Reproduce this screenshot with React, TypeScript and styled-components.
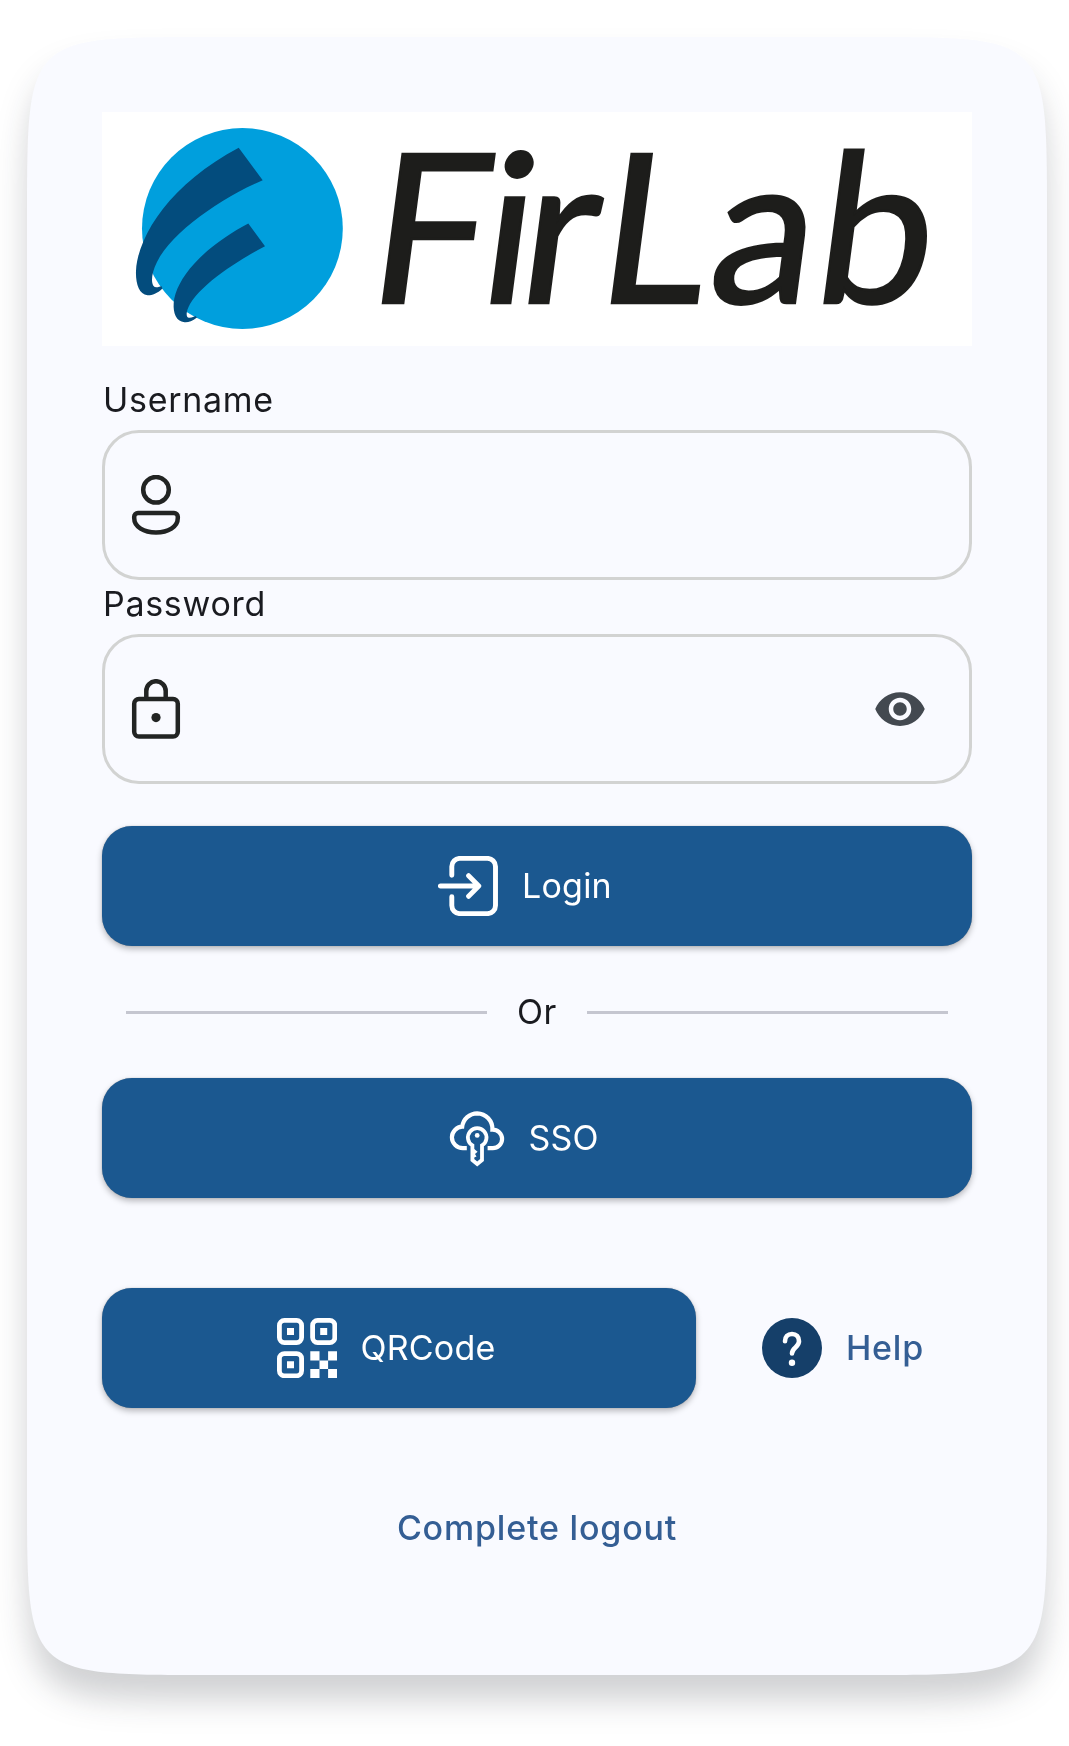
import React from "react";
import styled, { createGlobalStyle, css } from "styled-components";

const GlobalStyle = createGlobalStyle`
  *, *::before { box-sizing: border-box; }
  body {
    margin: 0;
    background: #fff;
    color: #1a1b20;
    font-family: Inter, "Liberation Sans", sans-serif;
    font-size: 34px;
    font-weight: 400;
    line-height: 48px;
    letter-spacing: 0.7px;
  }
`;

const Page = styled.main`
  display: flex;
  justify-content: center;
  align-items: flex-start;
  min-height: 1746px;
  padding: 37px 22px 0 27px;
  overflow: hidden;
`;

const Card = styled.section`
  position: relative;
  isolation: isolate;
  display: flex;
  flex-direction: column;
  width: 1020px;
  height: 1638px;
  padding: 75px;

  &::before {
    content: "";
    position: absolute;
    inset: 0;
    z-index: -1;
    background: #f9faff;
    clip-path: path("M0 180C0 0 0 0 180 0H840C1020 0 1020 0 1020 180V1458C1020 1638 1020 1638 840 1638H180C0 1638 0 1638 0 1458Z");
  }
`;

const CardShadow = styled.div`
  filter: drop-shadow(0 25px 16px rgba(22, 26, 34, 0.2));
`;

const LogoPanel = styled.div`
  height: 234px;
  background: #fff;
`;

const LogoImage = styled.svg`
  display: block;
  overflow: visible;
`;

const Label = styled.label<{ $height: number }>`
  display: flex;
  align-items: flex-end;
  height: ${(p) => p.$height}px;
  padding: 0 0 6px 1px;
`;

const Field = styled.div`
  display: flex;
  align-items: center;
  height: 150px;
  padding: 0 42px 0 21px;
  border: 3px solid #d2d3d2;
  border-radius: 37px;
`;

const Input = styled.input`
  flex: 1;
  min-width: 0;
  height: 100%;
  padding: 0 24px;
  border: 0;
  outline: 0;
  background: transparent;
  font: inherit;
`;

const buttonText = css`
  font: inherit;
  letter-spacing: inherit;
  display: flex;
  align-items: center;
  justify-content: center;
  border: 0;
  padding: 0;
`;

const PrimaryButton = styled.button<{ $width?: number; $gap?: number; $inset?: number }>`
  ${buttonText}
  gap: ${(p) => p.$gap ?? 24}px;
  flex: none;
  width: ${(p) => (p.$width ? `${p.$width}px` : "100%")};
  height: 120px;
  padding-right: ${(p) => p.$inset ?? 24}px;
  border-radius: 30px;
  background: #1b5890;
  color: #fff;
  font-weight: 400;
  letter-spacing: 0.2px;
  box-shadow: 0 0 1px rgba(0, 0, 0, 0.35), 0 3px 6px rgba(0, 0, 0, 0.27);
`;

const TextButton = styled.button`
  ${buttonText}
  gap: 24px;
  background: transparent;
  color: #345e94;
  font-weight: 500;
  letter-spacing: 0.8px;
`;

const LoginArea = styled.div`
  padding-top: 42px;
`;

const OrRow = styled.div`
  display: flex;
  align-items: center;
  gap: 30px;
  height: 132px;
  padding: 0 24px;
`;

const Rule = styled.span`
  flex: 1;
  height: 3px;
  background: #c5c6d0;
`;

const ActionRow = styled.div`
  display: flex;
  margin-top: 90px;
`;

const HelpSlot = styled.div`
  display: flex;
  flex: 1;
  justify-content: center;
  align-items: center;
  padding-left: 18px;
`;

const LogoutRow = styled.div`
  display: flex;
  justify-content: center;
  margin-top: 96px;
`;

const Icon = styled.svg<{ $size?: number }>`
  flex: none;
  display: block;
  width: ${(p) => p.$size ?? 60}px;
  height: ${(p) => p.$size ?? 60}px;
`;

const Wordmark = styled.text`
  font-family: Lato, "Liberation Sans", sans-serif;
  font-size: 208px;
  font-weight: 400;
  letter-spacing: 0;
  fill: #1d1d1b;
  stroke: #1d1d1b;
  stroke-width: 2.5px;
`;

const Logo = () => (
  <LogoImage width="870" height="234" viewBox="102 112 870 234" role="img" aria-label="FirLab">
    <circle cx="242.4" cy="228.5" r="100.4" fill="#009fdd" />
    <path d="M152 273 Q155 282 161.500 288 Q157 289 154.500 285 Q151 280 152 273Z" fill="#fff" />
    <path d="M187 313 Q191 317 195.500 317.500 Q190 319 187.500 317.500 Q185.500 316 187 313Z" fill="#fff" />
    <path
      fill="#034c7d"
      d="M238.700 147.700L262.700 180.300C221 198 172 232 157 262C150 276 151 287 156 287.300C158 287.500 160 286.500 161.300 286L162.500 288.500C157 294 151 295.500 147.500 295.200C139 294.500 135.500 283 136 271C138 234 172 183 238.700 147.700Z"
    />
    <path
      fill="#034c7d"
      d="M248.300 223.500L265 246.300C237 261 203 283 190 304C185.500 312 186 317.500 189 317.800C192 318 194 316.500 195.500 316L197 317.500C192 321.500 188 322.500 184.500 322.200C176 321.500 173 313 173.700 303C176 279 202 248 248.300 223.500Z"
    />
    <Wordmark x="364 476 515 593 705 810" y="0" transform="translate(0 303) skewX(-7.5)">
      FirLab
    </Wordmark>
  </LogoImage>
);

const UserIcon = () => (
  <Icon viewBox="0 0 60 60" fill="none" stroke="#222423" strokeWidth="4.500">
    <circle cx="30" cy="14.800" r="12.800" />
    <path d="M12 37.900H48a3.800 3.800 0 0 1 3.800 3.800V43C51.800 52 42 57.400 30 57.400S8.200 52 8.200 43V41.700A3.800 3.800 0 0 1 12 37.900Z" />
  </Icon>
);

const LockIcon = () => (
  <Icon viewBox="0 0 60 60" fill="none" stroke="#222423" strokeWidth="4.500">
    <rect x="8.200" y="19.900" width="43.600" height="37.700" rx="4.800" />
    <path d="M20.300 19.900V11.900a9.700 9.700 0 0 1 19.400 0V19.900" />
    <circle cx="30" cy="38.600" r="4.600" fill="#222423" stroke="none" />
  </Icon>
);

const EyeIcon = () => (
  <Icon $size={54} viewBox="0 0 24 24" fill="#434950">
    <path d="M12 4.500C7 4.500 2.730 7.610 1 12c1.730 4.390 6 7.500 11 7.500s9.270-3.110 11-7.500c-1.730-4.390-6-7.500-11-7.500zM12 17c-2.760 0-5-2.240-5-5s2.240-5 5-5 5 2.240 5 5-2.240 5-5 5zm0-8c-1.660 0-3 1.340-3 3s1.340 3 3 3 3-1.340 3-3-1.340-3-3-3z" />
  </Icon>
);

const LoginIcon = () => (
  <Icon viewBox="0 0 60 60" fill="none" stroke="#fff" strokeWidth="4.900" strokeLinecap="round" strokeLinejoin="round">
    <path d="M13.800 19.300V10.400a8 8 0 0 1 8-8H49.500a8 8 0 0 1 8 8V49.600a8 8 0 0 1-8 8H21.800a8 8 0 0 1-8-8V40.800" />
    <path d="M2.400 30H40.500M30.600 19.700L40.800 30L30.600 40.300" />
  </Icon>
);

const CloudKeyIcon = () => (
  <Icon viewBox="0 0 60 60" fill="none" stroke="#fff" strokeWidth="4.200">
    <path d="M19.800 40.200H16A11 11 0 0 1 4.900 29.300A10.900 10.900 0 0 1 15.200 18.700A15.300 15.300 0 0 1 30.200 5.300A15.600 15.600 0 0 1 45.400 21.700A9.500 9.500 0 0 1 55.100 31A9.300 9.300 0 0 1 45.700 40.200H40.600" />
    <path d="M25.400 37.400A9.300 9.300 0 1 1 35 37.400V52L30.200 56L25.400 52Z" strokeWidth="3.800" />
    <circle cx="30.200" cy="27.400" r="2.400" fill="#fff" stroke="none" />
    <path d="M26 40L30.600 43.700L28 46L29.500 48.500L26 50Z" fill="#fff" stroke="none" />
  </Icon>
);

const QrIcon = () => (
  <Icon viewBox="0 0 60 60" fill="#fff">
    <g fill="none" stroke="#fff" strokeWidth="4.800">
      <rect x="2.400" y="2.400" width="22.200" height="22.200" rx="5" />
      <rect x="35.600" y="2.400" width="22.200" height="22.200" rx="5" />
      <rect x="2.400" y="35.600" width="22.200" height="22.200" rx="5" />
    </g>
    <path d="M10 10h7v7h-7zM43.200 10h7v7h-7zM10 43.200h7v7h-7zM33.300 33.300h9.200v9.200h-9.200zM51.100 33.300h8.900v9.200h-8.900zM42.500 42.500h8.600v8.600h-8.600zM33.300 51.100h9.200v8.900h-9.200zM51.100 51.100h8.900v8.900h-8.900z" />
  </Icon>
);

const HelpIcon = () => (
  <Icon viewBox="0 0 60 60">
    <circle cx="30" cy="30" r="30" fill="#153f69" />
    <path
      d="M23 23.300C23 18.800 25.800 16 30 16S37 18.800 37 23.300C37 29.500 30 29.500 30 35.500"
      fill="none"
      stroke="#fff"
      strokeWidth="4.600"
      strokeLinecap="round"
    />
    <circle cx="30" cy="44.700" r="3.200" fill="#fff" />
  </Icon>
);

export default function App() {
  return (
    <Page>
      <GlobalStyle />
      <CardShadow>
        <Card>
          <LogoPanel>
            <Logo />
          </LogoPanel>

          <Label htmlFor="username" $height={84}>Username</Label>
          <Field>
            <UserIcon />
            <Input id="username" />
          </Field>

          <Label htmlFor="password" $height={54}>Password</Label>
          <Field>
            <LockIcon />
            <Input id="password" type="password" />
            <EyeIcon />
          </Field>

          <LoginArea>
            <PrimaryButton>
              <LoginIcon />
              <span>Login</span>
            </PrimaryButton>
          </LoginArea>

          <OrRow>
            <Rule />
            <span>Or</span>
            <Rule />
          </OrRow>

          <PrimaryButton $gap={21} $inset={28}>
            <CloudKeyIcon />
            <span>SSO</span>
          </PrimaryButton>

          <ActionRow>
            <PrimaryButton $width={594} $inset={26}>
              <QrIcon />
              <span>QRCode</span>
            </PrimaryButton>
            <HelpSlot>
              <TextButton>
                <HelpIcon />
                <span>Help</span>
              </TextButton>
            </HelpSlot>
          </ActionRow>

          <LogoutRow>
            <TextButton>Complete logout</TextButton>
          </LogoutRow>
        </Card>
      </CardShadow>
    </Page>
  );
}
